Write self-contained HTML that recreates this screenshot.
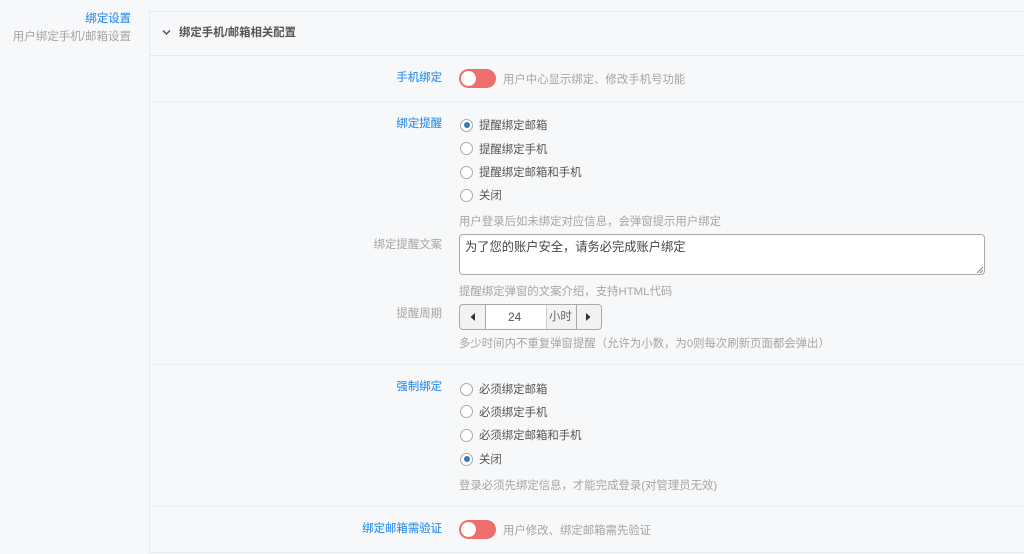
<!DOCTYPE html>
<html lang="zh"><head><meta charset="utf-8"><title>绑定设置</title>
<style>
html,body{margin:0;padding:0;background:#f7f8fa}
#w{position:absolute;left:0;top:0;width:1024px;height:554px;overflow:hidden;background:#f7f8fa;font-family:"Liberation Sans","Noto Sans CJK SC",sans-serif;font-size:11.4px;color:#555;filter:blur(.3px)}
body{width:1024px;height:554px;overflow:hidden;position:relative}
.t{position:absolute;white-space:nowrap;line-height:16px;height:16px}
.r{text-align:right;right:582px}
.b{color:#3a96f0;font-weight:500}
.g{color:#a5a5a5}
.d{color:#555}
.line{position:absolute;left:150px;right:0;height:1px;background:#eeeff1}
.sw{position:absolute;left:459px;width:37px;height:19px;border-radius:10px;background:#ee6e6e}
.sw:after{content:"";position:absolute;left:2px;top:2px;width:15px;height:15px;border-radius:50%;background:#fff}
.rd{position:absolute;left:460px;width:11px;height:11px;border:1.5px solid #aaa;border-radius:50%;background:#fff}
.rd.on:after{content:"";position:absolute;left:2.5px;top:2.5px;width:6px;height:6px;border-radius:50%;background:#337ab7}
</style></head><body><div id="w">
<div class="t b" style="right:893px;top:11px">绑定设置</div>
<div class="t g" style="right:893px;top:29px;font-size:11.5px">用户绑定手机/邮箱设置</div>

<div style="position:absolute;left:149px;top:11px;width:875px;height:542px;border:1px solid #e9eaec;border-right:0;box-sizing:border-box"></div>
<div class="line" style="top:55px;background:#e8e9eb"></div>
<svg style="position:absolute;left:162px;top:29px" width="9" height="7" viewBox="0 0 9 7"><path d="M1 1.5l3.5 3.5L8 1.5" fill="none" stroke="#555" stroke-width="1.5"/></svg>
<div class="t" style="left:179px;top:25px;font-weight:700;color:#555">绑定手机/邮箱相关配置</div>

<div class="t b r" style="top:70px">手机绑定</div>
<div class="sw" style="top:69px"></div>
<div class="t g" style="left:503px;top:72px">用户中心显示绑定、修改手机号功能</div>
<div class="line" style="top:101px"></div>

<div class="t b r" style="top:116px">绑定提醒</div>
<div class="rd on" style="top:118.5px"></div><div class="t d" style="left:479px;top:118px">提醒绑定邮箱</div>
<div class="rd" style="top:142px"></div><div class="t d" style="left:479px;top:142px">提醒绑定手机</div>
<div class="rd" style="top:165.5px"></div><div class="t d" style="left:479px;top:165px">提醒绑定邮箱和手机</div>
<div class="rd" style="top:188.5px"></div><div class="t d" style="left:479px;top:188px">关闭</div>
<div class="t g" style="left:459px;top:214px">用户登录后如未绑定对应信息，会弹窗提示用户绑定</div>

<div class="t g r" style="top:237px">绑定提醒文案</div>
<div style="position:absolute;left:459px;top:234px;width:526px;height:41px;box-sizing:border-box;background:#fff;border:1px solid #a9a9a9;border-radius:4px"></div>
<div class="t" style="left:465px;top:239px;color:#444;font-size:12.25px">为了您的账户安全，请务必完成账户绑定</div>
<svg style="position:absolute;left:976px;top:266px" width="8" height="8" viewBox="0 0 8 8"><path d="M1 7L7 1M4 7L7 4" stroke="#888" stroke-width="1" fill="none"/></svg>
<div class="t g" style="left:459px;top:284px">提醒绑定弹窗的文案介绍，支持HTML代码</div>

<div class="t g r" style="top:306px">提醒周期</div>
<div style="position:absolute;left:459px;top:304px;width:143px;height:26px;box-sizing:border-box;border:1px solid #a9a9a9;border-radius:4px;background:#f3f3f3;overflow:hidden">
<div style="position:absolute;left:25px;top:0;width:60px;height:24px;background:#fff;border-left:1px solid #a9a9a9;border-right:1px solid #ccc;box-sizing:content-box"></div>
<div style="position:absolute;left:116px;top:0;width:1px;height:24px;background:#a9a9a9"></div>
</div>
<svg style="position:absolute;left:469px;top:312px" width="7" height="10" viewBox="0 0 7 10"><path d="M6 1v8L1.5 5z" fill="#333"/></svg>
<svg style="position:absolute;left:585px;top:312px" width="7" height="10" viewBox="0 0 7 10"><path d="M1 1v8L5.5 5z" fill="#333"/></svg>
<div class="t" style="left:508px;top:309px;color:#555;font-size:12px">24</div>
<div class="t" style="left:549px;top:309px;color:#666">小时</div>
<div class="t g" style="left:459px;top:336px">多少时间内不重复弹窗提醒（允许为小数，为0则每次刷新页面都会弹出）</div>
<div class="line" style="top:364px"></div>

<div class="t b r" style="top:379px">强制绑定</div>
<div class="rd" style="top:382.5px"></div><div class="t d" style="left:479px;top:382px">必须绑定邮箱</div>
<div class="rd" style="top:405px"></div><div class="t d" style="left:479px;top:405px">必须绑定手机</div>
<div class="rd" style="top:428.5px"></div><div class="t d" style="left:479px;top:428px">必须绑定邮箱和手机</div>
<div class="rd on" style="top:452.5px"></div><div class="t d" style="left:479px;top:452px">关闭</div>
<div class="t g" style="left:459px;top:478px">登录必须先绑定信息，才能完成登录(对管理员无效)</div>
<div class="line" style="top:506px"></div>

<div class="t b r" style="top:521px">绑定邮箱需验证</div>
<div class="sw" style="top:520px"></div>
<div class="t g" style="left:503px;top:523px">用户修改、绑定邮箱需先验证</div>
</div></body></html>
